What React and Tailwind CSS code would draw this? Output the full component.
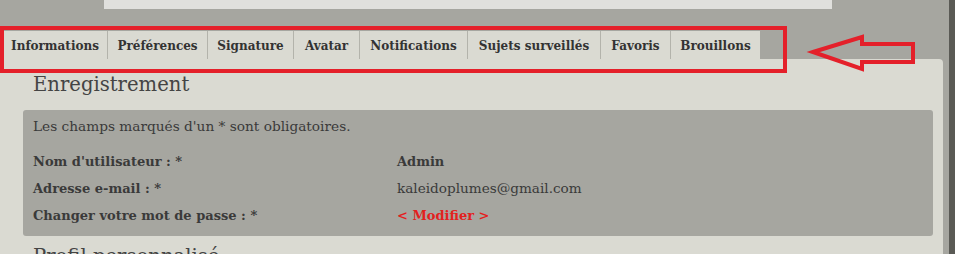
import React from "react";

const tabs = [
  { label: "Informations", w: "w-[104px]" },
  { label: "Préférences", w: "w-[100px]" },
  { label: "Signature", w: "w-[86px]" },
  { label: "Avatar", w: "w-[66px]" },
  { label: "Notifications", w: "w-[108px]" },
  { label: "Sujets surveillés", w: "w-[133px]" },
  { label: "Favoris", w: "w-[70px]" },
  { label: "Brouillons", w: "w-[90px]" },
];

const rows = [
  { label: "Nom d'utilisateur : *", value: "Admin", valueClass: "text-[13px] font-bold text-[#3a3a3a]" },
  { label: "Adresse e-mail : *", value: "kaleidoplumes@gmail.com", valueClass: "text-[13.6px] text-[#3a3a3a]" },
  { label: "Changer votre mot de passe : *", value: "< Modifier >", valueClass: "text-[13px] font-bold text-[#e3201e]" },
];

const serif = { fontFamily: '"DejaVu Serif", "Liberation Serif", serif' };

const Arrow = () => (
  <svg className="absolute left-[806px] top-[30px]" width="114" height="46" viewBox="806 30 114 46">
    <polygon
      points="813,52 862,37 862,44 913,44 913,62 862,62 862,69"
      fill="none"
      stroke="#e4202a"
      strokeWidth="4"
      strokeLinejoin="miter"
    />
  </svg>
);

const App = () => {
  return (
    <div className="relative flex h-[254px] w-[955px] overflow-hidden bg-[#a6a6a0]" style={serif}>
      <div className="flex w-[949px] flex-col">
        <div className="ml-[104px] h-[9px] w-[728px] shrink-0 bg-[#e0e0dd]" />

        {/* tab bar */}
        <div className="ml-[3px] mt-[22px] flex h-[28px] shrink-0 items-stretch">
          {tabs.map((tab, i) => (
            <div
              key={tab.label}
              className={`${tab.w} flex items-center justify-center bg-[#dadad2] pt-[2px] text-[12px] font-bold text-[#333] ${
                i > 0 ? "border-l border-[#b3b3ab]" : ""
              }`}
            >
              {tab.label}
            </div>
          ))}
        </div>

        {/* panel */}
        <div className="flex w-[943px] flex-1 shrink-0 flex-col rounded-tr-[4px] bg-[#dadad2] pl-[23px] pr-[10px]">
          <h2 className="ml-[10px] mt-[14px] h-[24px] shrink-0 text-[19.6px] leading-[24px] text-[#444]">Enregistrement</h2>

          <div className="mt-[13px] flex shrink-0 flex-col rounded-[3px] bg-[#a6a6a0] px-[10px] pb-[7px] pt-[6px]">
            <p className="h-[20px] text-[13.7px] leading-[20px] text-[#3a3a3a]">
              Les champs marqués d'un * sont obligatoires.
            </p>
            <div className="mt-[12px] flex flex-col">
              {rows.map((row) => (
                <div key={row.label} className="flex h-[27px] items-center">
                  <span className="w-[364px] text-[13px] font-bold text-[#3a3a3a]">{row.label}</span>
                  <span className={row.valueClass}>{row.value}</span>
                </div>
              ))}
            </div>
          </div>

          <h2 className="ml-[10px] mt-[9px] h-[24px] shrink-0 text-[19.6px] leading-[24px] text-[#444]">Profil personnalisé</h2>
        </div>
      </div>
      <div className="w-[6px] bg-[#5a5a55]" />

      {/* annotation overlay */}
      <div className="absolute left-0 top-[26px] h-[47px] w-[787px] border-[4px] border-[#e4202a]" />
      <Arrow />
    </div>
  );
};

export default App;
